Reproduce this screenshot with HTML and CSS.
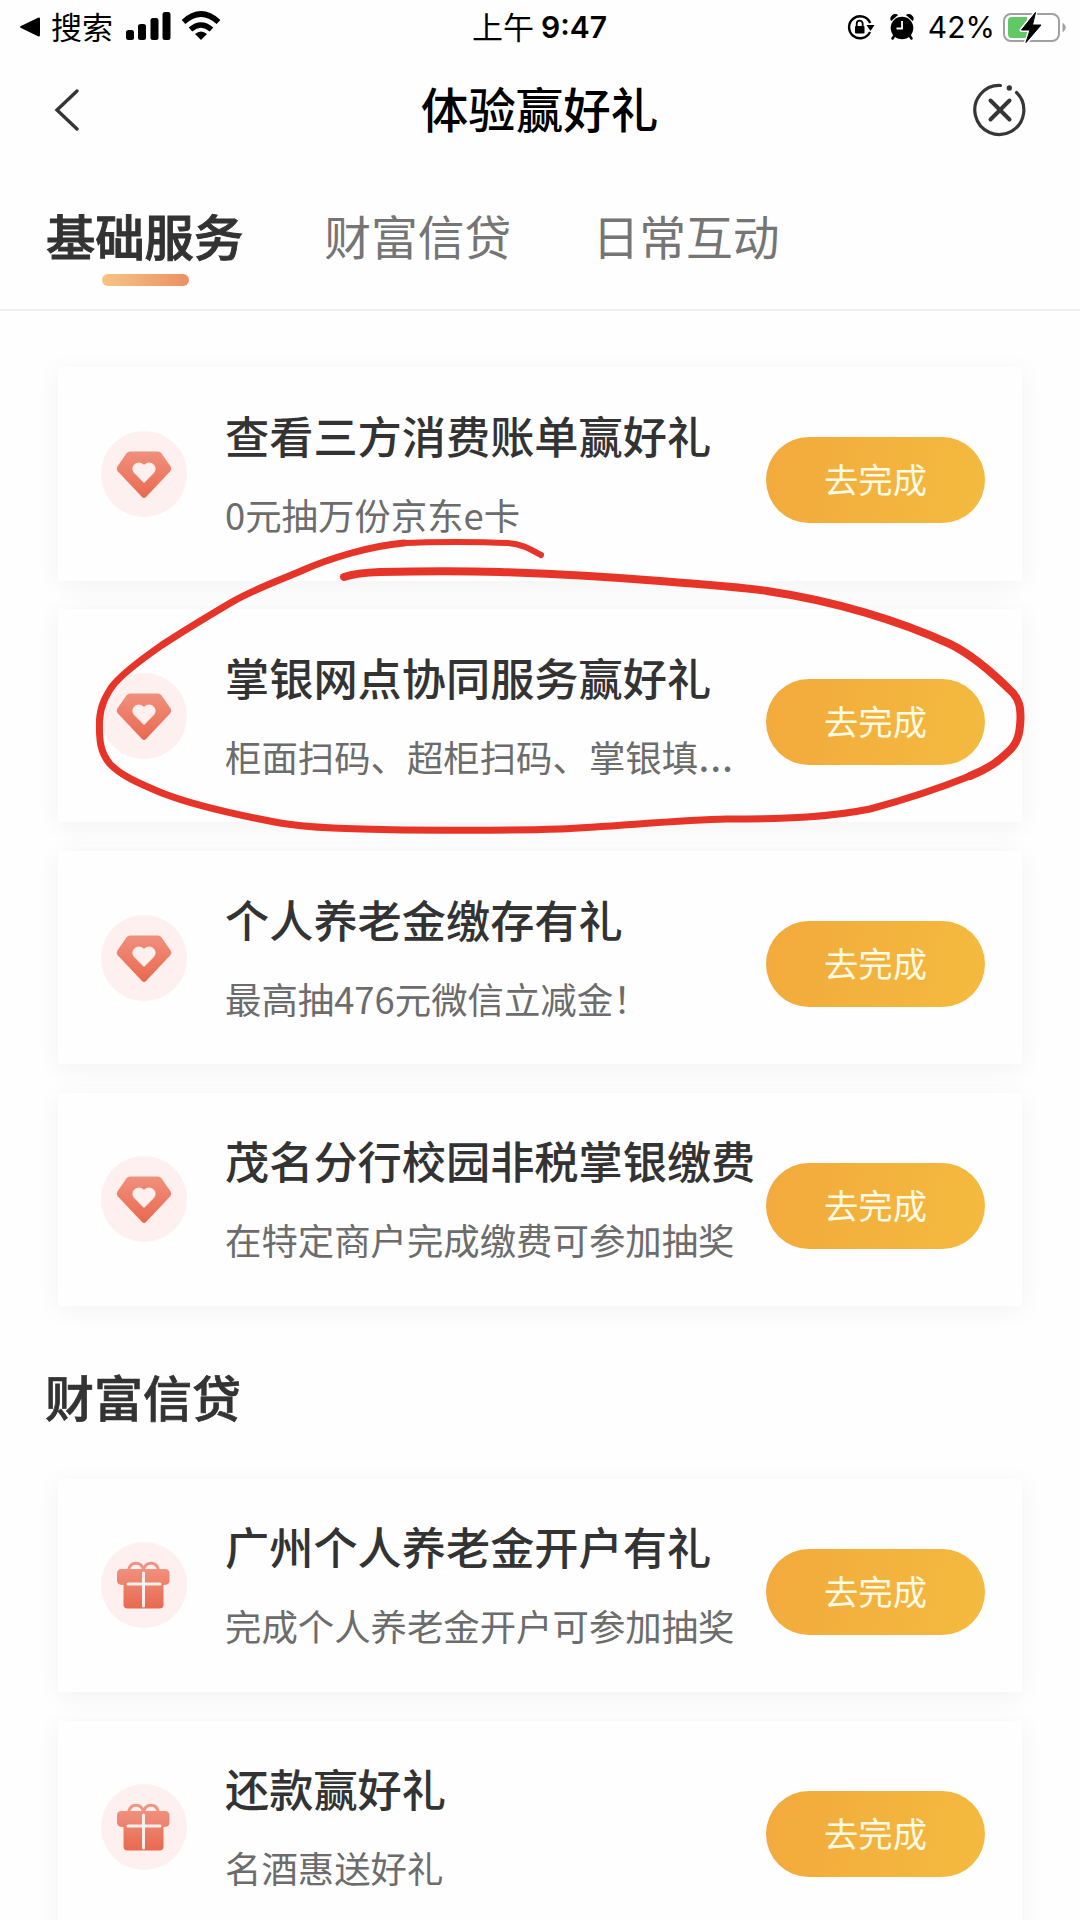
FILE: index.html
```html
<!DOCTYPE html>
<html lang="zh-CN">
<head>
<meta charset="utf-8">
<title>体验赢好礼</title>
<link rel="stylesheet" href="styles.css">
</head>
<body>
<svg class="defs" width="0" height="0" aria-hidden="true">
  <defs>
    <linearGradient id="coral" x1="0" y1="0" x2="0" y2="1">
      <stop offset="0" stop-color="#f0907d"/>
      <stop offset="1" stop-color="#e9694f"/>
    </linearGradient>
    <symbol id="gem" viewBox="0 0 86 86">
      <circle cx="43" cy="43" r="43" fill="#fdf0ef"/>
      <path d="M29 20.5h28q2 0 3.400 1.800l9.200 13.200q1.600 2.500-.3 4.700L45 66q-2 2-4 0L16.700 40.200q-1.900-2.200-.3-4.700l9.200-13.200Q27 20.500 29 20.500Z" fill="url(#coral)"/>
      <path d="M43 51.500 33.600 42c-5-5.500 1.700-13 8-8.700l1.400 1 1.400-1c6.300-4.300 13 3.200 8 8.700Z" fill="#fdf0ef" stroke="#fdf0ef"/>
    </symbol>
    <symbol id="gift" viewBox="0 0 86 86">
      <circle cx="43" cy="43" r="43" fill="#fdf0ef"/>
      <path d="M27.500 28c2-9 13-9 15 0c2-9 13-9 15 0" fill="none" stroke="#ef9583" stroke-width="3"/>
      <path d="M20.500 27h43.500q4.500 0 4.500 4.500v7q0 4.500-6 4.500v19.500q0 4-4 4h-32q-4 0-4-4V43q-6.500 0-6.500-4.500v-7q0-4.500 4.500-4.500Z" fill="url(#coral)"/>
      <path d="M42.500 31v33M27 42h32" fill="none" stroke="#fdf0ef" stroke-width="3" stroke-linecap="round"/>
    </symbol>
  </defs>
</svg>

<div class="screen">
  <div class="status">
    <div class="status-left">
      <svg class="back-app" width="20" height="20" viewBox="0 0 20 20"><path d="M1 9 18 .8q2-.8 2 1.200v16q0 2-2 1.200L1 11q-2-1 0-2Z"/></svg>
      <span class="status-text">搜索</span>
      <svg class="signal" width="45" height="28" viewBox="0 0 45 28"><rect y="18" width="8" height="10" rx="2.500"/><rect x="12" y="12" width="8" height="16" rx="2.500"/><rect x="24.500" y="6" width="8" height="22" rx="2.500"/><rect x="36.500" width="8" height="28" rx="2.500"/></svg>
      <svg class="wifi" width="40" height="30" viewBox="0 0 40 30"><g fill="none" stroke="#000" stroke-width="5.500"><path d="M2.500 11Q20-5 37.500 11"/><path d="M9.500 18.500Q20 9.500 30.500 18.500"/></g><path d="m20 29-6-6q6-5 12 0Z"/></svg>
    </div>
    <div class="clock"><span>上午</span><b>9:47</b></div>
    <div class="status-right">
      <svg width="28" height="26" viewBox="0 0 28 26"><path d="M23 18a11 11 0 1 1 .2-9" fill="none" stroke="#000" stroke-width="2.400"/><path d="M19.500 11h8l-4 6Z"/><rect x="8" y="12" width="9.500" height="7.500" rx="1"/><path d="M9.700 12V9.700a3 3 0 0 1 6 0V12" fill="none" stroke="#000" stroke-width="1.800"/></svg>
      <svg class="alarm" width="24" height="26" viewBox="0 0 24 26"><circle cx="12" cy="14" r="11.300"/><path d="M1.800 6.500C-.5 3.500 4-1 7.500 1.500M22.200 6.500C24.500 3.500 20-1 16.500 1.500" stroke="#000" stroke-width="1.500"/><path d="m4.500 21.500-2 3M19.500 21.500l2 3" stroke="#000" stroke-width="2.500" stroke-linecap="round"/><path d="M12 7v7.500H6.500" fill="none" stroke="#fff" stroke-width="1.800"/></svg>
      <span class="percent">42%</span>
      <svg class="battery" width="64" height="32" viewBox="0 0 64 32"><rect x="1" y="3" width="55" height="27" rx="7" fill="#fff" stroke="#a0a0a0" stroke-width="2"/><path d="M59.500 11.500q6.500 5 0 10Z" fill="#a0a0a0"/><path d="M8.500 6H24v21H8.500q-3.500 0-3.500-4V10q0-4 3.500-4Z" fill="#62c866"/><path d="M32.500 1.500 18.500 19h8.500l-4 12.500L38 14h-8.500Z" stroke="#fff" stroke-width="4" stroke-linejoin="round"/><path d="M32.500 1.500 18.500 19h8.500l-4 12.500L38 14h-8.500Z" stroke="#000" stroke-linejoin="round"/></svg>
    </div>
  </div>

  <header class="nav">
    <svg width="26" height="42" viewBox="0 0 26 42"><path d="M23 2 3 21l20 19" fill="none" stroke="#353535" stroke-width="3.400" stroke-linecap="round"/></svg>
    <h1>体验赢好礼</h1>
    <svg width="54" height="54" viewBox="0 0 54 54" fill="none" stroke="#363636" stroke-width="3.200" stroke-linecap="round"><path d="M27.500 2.500A24.500 24.500 0 1 0 43.500 9.500"/><circle cx="36.300" cy="5" r="2.700" fill="#363636" stroke="none"/><path d="m17.500 17.500 19 19m0-19-19 19" stroke-width="4"/></svg>
  </header>

  <nav class="tabs">
    <a class="tab active">基础服务</a>
    <a class="tab">财富信贷</a>
    <a class="tab">日常互动</a>
  </nav>

  <main>
    <section class="cards">
      <article class="card"><svg class="icon"><use href="#gem"/></svg><div class="info"><h3>查看三方消费账单赢好礼</h3><p>0元抽万份京东e卡</p></div><button class="go">去完成</button></article>
      <article class="card"><svg class="icon"><use href="#gem"/></svg><div class="info"><h3>掌银网点协同服务赢好礼</h3><p>柜面扫码、超柜扫码、掌银填<span class="dots">…</span></p></div><button class="go">去完成</button></article>
      <article class="card"><svg class="icon"><use href="#gem"/></svg><div class="info"><h3>个人养老金缴存有礼</h3><p>最高抽476元微信立减金！</p></div><button class="go">去完成</button></article>
      <article class="card"><svg class="icon"><use href="#gem"/></svg><div class="info"><h3>茂名分行校园非税掌银缴费</h3><p>在特定商户完成缴费可参加抽奖</p></div><button class="go">去完成</button></article>
    </section>
    <h2>财富信贷</h2>
    <section class="cards">
      <article class="card"><svg class="icon"><use href="#gift"/></svg><div class="info"><h3>广州个人养老金开户有礼</h3><p>完成个人养老金开户可参加抽奖</p></div><button class="go">去完成</button></article>
      <article class="card"><svg class="icon"><use href="#gift"/></svg><div class="info"><h3>还款赢好礼</h3><p>名酒惠送好礼</p></div><button class="go">去完成</button></article>
    </section>
  </main>

  <svg class="marker" width="1080" height="1920" viewBox="0 0 1080 1920">
    <path stroke-width="8" d="M344 577C356 573 366 572.500 380 572C420 571 470 571 500 572C560 574 610 577 660 581C700 584 740 587 767 591C835 601 900 621 950 644C975 656 1000 680 1013 693C1019 700 1020.500 706 1020.500 718C1020 733 1018 742 1010 750C1000 760 990 768 970 776"/>
    <path stroke-width="7" d="M970 776C940 788 900 801 870 809C830 817 790 819 727 819C680 820 620 826 560 829C500 831 460 830 404 830C350 829 310 828 280 823C232 814 190 804 162 793C138 783 120 775 110 764C100 752 99 740 99.500 720C100.500 705 106 696 111 688C119 676 139 661 162 645C185 630 210 615 232 602C255 589 275 582 301 571C330 558 370 546 404 543"/>
    <path stroke-width="6" d="M404 543C430 541.500 480 541.500 508 543C522 544 530 549 541 555"/>
  </svg>
</div>
</body>
</html>
```

FILE: styles.css
```css
* { box-sizing: border-box; margin: 0; padding: 0; }

body {
  background: #fefefe;
  color: #333;
  font-family: "Noto Sans CJK SC", sans-serif;
}

svg { display: block; flex: none; }
.defs { position: absolute; }

.screen {
  position: relative;
  width: 1080px;
  height: 1920px;
  overflow: hidden;
}

.status {
  display: grid;
  grid-template-columns: 1fr auto 1fr;
  align-items: center;
  height: 54px;
  padding: 0 13px 0 20px;
  color: #000;
}
.status-left, .status-right { display: flex; align-items: center; }
.status-right { justify-content: flex-end; }
.status-text { margin-left: 11px; padding-bottom: 3px; font-size: 31px; line-height: 47px; }
.signal { margin: 0 0 2px 13px; }
.wifi { margin: 0 0 2px 10px; }
.clock { display: flex; align-items: center; gap: 7px; margin-right: 8px; font-size: 31px; line-height: 47px; }
.clock span { padding-bottom: 3px; }
.clock b { font: 600 30px/50px Inter, sans-serif; }
.alarm { margin-left: 15px; }
.percent { margin: 0 8px 0 14px; font: 400 30px/54px Inter, sans-serif; }

.nav {
  display: flex;
  align-items: center;
  justify-content: space-between;
  height: 112px;
  padding: 0 53px 0 54px;
}
.nav h1 {
  margin-left: 26px;
  padding-bottom: 6px;
  color: #000;
  font-size: 47.500px;
  font-weight: 500;
}

.tabs {
  display: flex;
  align-items: flex-start;
  gap: 81px;
  height: 145px;
  padding: 34px 46px 0;
  border-bottom: 2px solid #efefef;
}
.tab { color: #757575; font-size: 46.800px; line-height: 70px; }
.tab.active {
  position: relative;
  color: #333;
  font-size: 49.300px;
  font-weight: 500;
  -webkit-text-stroke: 1px #333;
}
.tab.active::after {
  content: "";
  position: absolute;
  top: 74px;
  left: 56px;
  width: 87px;
  height: 12px;
  border-radius: 6px;
  background: linear-gradient(90deg, #f6c584, #ec9064);
}

main { padding-top: 56px; }

.cards { display: grid; gap: 28.400px; padding: 0 58px; }

.card {
  display: grid;
  grid-template-columns: 86px 540px 219px;
  align-items: center;
  height: 213.500px;
  padding-left: 43px;
  background: #fefefe;
  box-shadow: 0 4px 24px rgba(0, 0, 0, .052);
}
.icon { width: 86px; height: 86px; }
.info { padding: 0 0 4px 38px; white-space: nowrap; }
.info h3 { font-size: 44.200px; font-weight: 500; line-height: 60px; }
.info p { margin-top: 24px; color: #6c6c6c; font-size: 36.400px; line-height: 50px; }
.dots { font-family: Inter, sans-serif; font-size: 41px; line-height: 1; }

.go {
  width: 219px;
  height: 86px;
  margin: 13px 0 0 39px;
  padding-bottom: 4px;
  border: 0;
  border-radius: 43px;
  background: linear-gradient(100deg, #f2aa3c, #f4ba3f);
  color: #fffbe4;
  font: 400 34.300px/80px "Noto Sans CJK SC", sans-serif;
}

h2 {
  height: 172.500px;
  padding-left: 45px;
  font-size: 49px;
  font-weight: 500;
  line-height: 180px;
  -webkit-text-stroke: .7px #333;
}

.marker {
  position: absolute;
  top: 0;
  left: 0;
  fill: none;
  stroke: #e63428;
  stroke-linecap: round;
  stroke-linejoin: round;
  pointer-events: none;
}
```
